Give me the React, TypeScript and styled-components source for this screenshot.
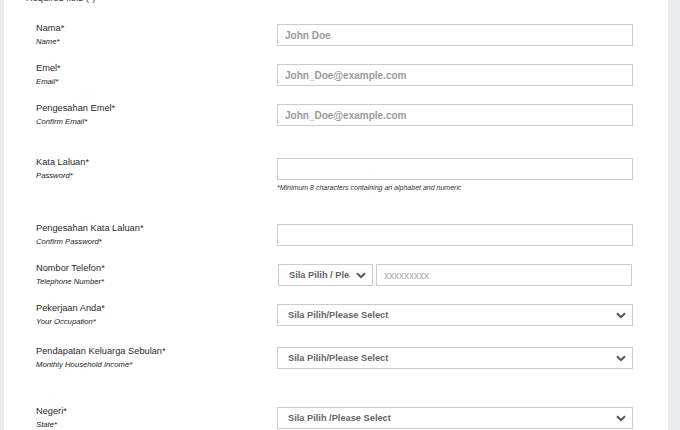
import React, { FC } from 'react'
import styled, { createGlobalStyle } from 'styled-components'

const GlobalStyle = createGlobalStyle`
    html, body {
        margin: 0;
        padding: 0;
        background: #e9ebee;
        overflow: hidden;
        font-family: "Liberation Sans", Arial, sans-serif;
    }
`

const Page = styled.div`
    display: flex;
    height: 430px;
`

const Panel = styled.div`
    background: white;
    margin-left: 4px;
    width: 664px;
    height: 100%;
    overflow: hidden;
`

const RequiredNote = styled.div`
    margin: -8px 0 18px 22px;
    font-size: 9.25px;
    line-height: 12px;
    color: #333;
`

const Row = styled.div<{ $h: number }>`
    display: flex;
    align-items: flex-start;
    height: ${({ $h }) => $h}px;
    padding-left: 32px;
`

const Label = styled.div`
    width: 241px;
    flex-shrink: 0;
`

const LabelMain = styled.div`
    font-size: 9.25px;
    line-height: 13px;
    color: #2a2a2a;
`

const LabelSub = styled.div`
    font-size: 7.7px;
    line-height: 13px;
    font-style: italic;
    color: #1a1a1a;
`

const Field = styled.div`
    width: 356px;
    margin-top: 2px;
`

const TextInput = styled.input`
    display: block;
    box-sizing: border-box;
    width: 100%;
    height: 22px;
    border: 1px solid #ccc;
    border-radius: 0;
    padding: 0 7px;
    font-family: "Liberation Sans", Arial, sans-serif;
    font-size: 10px;
    font-weight: bold;
    color: #555;
    outline: none;

    &::placeholder {
        color: #9a9a9a;
    }
`

const PhoneInput = styled(TextInput)`
    flex: 1;
    width: auto;
    font-weight: normal;

    &::placeholder {
        color: #aaa;
    }
`

const Hint = styled.div`
    margin-top: 3px;
    font-size: 7px;
    line-height: 9px;
    font-style: italic;
    color: #333;
    white-space: nowrap;
`

const SelectBox = styled.div<{ $w?: number }>`
    display: flex;
    align-items: center;
    box-sizing: border-box;
    width: ${({ $w }) => ($w ? `${$w}px` : '100%')};
    height: 22px;
    border: 1px solid #ccc;
    padding: 0 6px 0 10px;
    gap: 6px;
    flex-shrink: 0;
`

const SelectText = styled.span`
    flex: 1;
    overflow: hidden;
    white-space: nowrap;
    font-size: 9.25px;
    font-weight: bold;
    color: #666;
`

const PhoneGroup = styled.div`
    display: flex;
    gap: 3px;
    margin-left: 1px;
    margin-right: 1px;
`

const Chevron: FC = () => (
    <svg width="10" height="7" viewBox="0 0 10 7">
        <polyline points="1,1.2 5,5.2 9,1.2" fill="none" stroke="#555" strokeWidth="2" />
    </svg>
)

const Select: FC<{ text: string, w?: number }> = ({ text, w }) => (
    <SelectBox $w={w}>
        <SelectText>{text}</SelectText>
        <Chevron />
    </SelectBox>
)

interface IRow {
    main: string
    sub: string
    h: number
    field: React.ReactNode
}

const rows: IRow[] = [
    { main: 'Nama*', sub: 'Name*', h: 40, field: <TextInput placeholder="John Doe" /> },
    { main: 'Emel*', sub: 'Email*', h: 40, field: <TextInput placeholder="John_Doe@example.com" /> },
    { main: 'Pengesahan Emel*', sub: 'Confirm Email*', h: 54, field: <TextInput placeholder="John_Doe@example.com" /> },
    {
        main: 'Kata Laluan*', sub: 'Password*', h: 66, field: (
            <>
                <TextInput type="password" />
                <Hint>*Minimum 8 characters containing an alphabet and numeric</Hint>
            </>
        )
    },
    { main: 'Pengesahan Kata Laluan*', sub: 'Confirm Password*', h: 40, field: <TextInput type="password" /> },
    {
        main: 'Nombor Telefon*', sub: 'Telephone Number*', h: 40, field: (
            <PhoneGroup>
                <Select text="Sila Pilih / Please Select" w={95} />
                <PhoneInput placeholder="xxxxxxxxx" />
            </PhoneGroup>
        )
    },
    { main: 'Pekerjaan Anda*', sub: 'Your Occupation*', h: 43, field: <Select text="Sila Pilih/Please Select" /> },
    { main: 'Pendapatan Keluarga Sebulan*', sub: 'Monthly Household Income*', h: 60, field: <Select text="Sila Pilih/Please Select" /> },
    { main: 'Negeri*', sub: 'State*', h: 40, field: <Select text="Sila Pilih /Please Select" /> },
]

const App: FC = () => {
    return (
        <Page>
            <GlobalStyle />
            <Panel>
                <RequiredNote>Required field (*)</RequiredNote>
                {rows.map(r => (
                    <Row key={r.main} $h={r.h}>
                        <Label>
                            <LabelMain>{r.main}</LabelMain>
                            <LabelSub>{r.sub}</LabelSub>
                        </Label>
                        <Field>{r.field}</Field>
                    </Row>
                ))}
            </Panel>
        </Page>
    )
}

export default App
